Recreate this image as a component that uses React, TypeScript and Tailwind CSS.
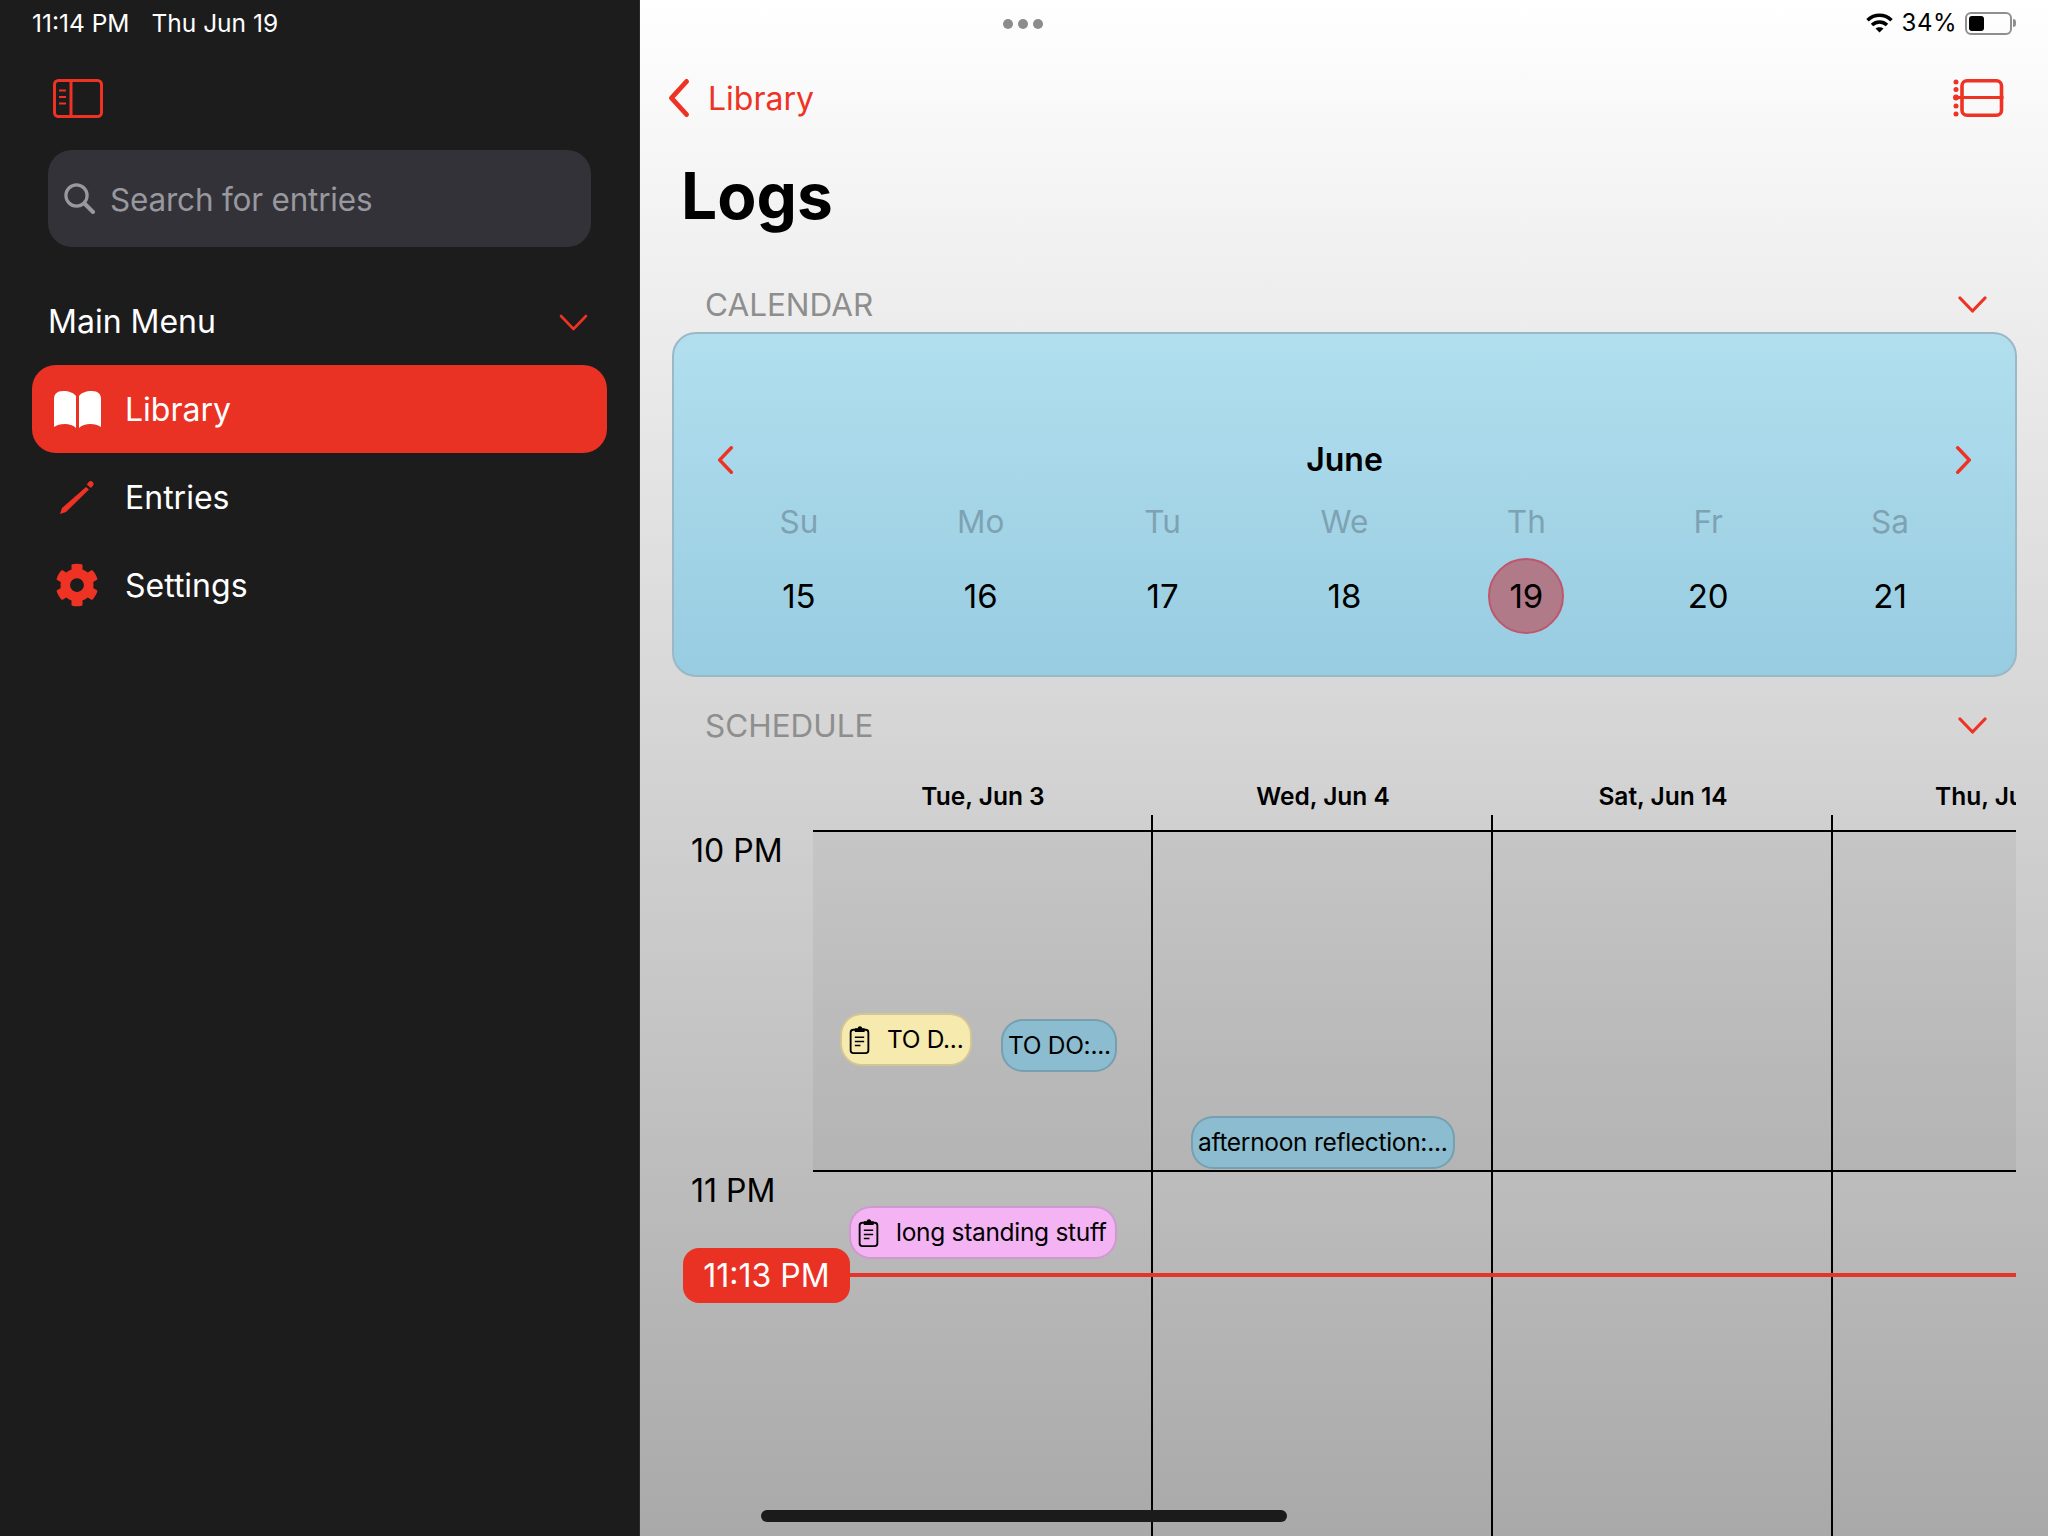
import React from "react";
import { FaCog } from "react-icons/fa";

const RED = "#ee3324";

function Chevron({ dir, className, sw = 3 }: { dir: "down" | "left" | "right"; className: string; sw?: number }) {
  const d = dir === "down" ? "M2 2 L14.5 15 L27 2" : dir === "left" ? "M16 2 L3 15 L16 28" : "M3 2 L16 15 L3 28";
  const vb = dir === "down" ? "0 0 29 17" : "0 0 19 30";
  return (
    <svg viewBox={vb} className={className} fill="none" stroke={RED} strokeWidth={sw} strokeLinecap="round" strokeLinejoin="round" preserveAspectRatio="none">
      <path d={d} />
    </svg>
  );
}

function SidebarIcon() {
  return (
    <svg viewBox="0 0 50 39" className="h-[39px] w-[50px]" fill="none" stroke={RED} strokeWidth="3">
      <rect x="1.5" y="1.5" width="47" height="36" rx="4" />
      <path d="M18 1.5V37.5" />
      <path d="M6 11.5h7M6 18h7M6 24.5h7" strokeWidth="2" />
    </svg>
  );
}

function SearchIcon() {
  return (
    <svg viewBox="0 0 31 31" className="h-[31px] w-[31px]" fill="none" stroke="#98989e" strokeWidth="3.2" strokeLinecap="round">
      <circle cx="12.5" cy="12.5" r="10.6" />
      <path d="M20.5 20.5L29 29" strokeWidth="4" />
    </svg>
  );
}

function BookIcon() {
  return (
    <svg viewBox="0 0 47 37" className="h-[37px] w-[47px]" fill="#ffffff">
      <path d="M0 8C0 3 3 0 9 0c6 0 11 2 13 5v32c-3-3-7-4-11-4-5 0-8 1-11 3z" />
      <path d="M47 8c0-5-3-8-9-8-6 0-11 2-13 5v32c3-3 7-4 11-4 5 0 8 1 11 3z" />
    </svg>
  );
}

function PencilIcon() {
  return (
    <svg viewBox="0 0 34 33" className="h-[33px] w-[34px]" fill={RED}>
      <path d="M26 6l3 2.600L6 31 0 33l2-6z" />
      <path d="M28.500 1.200c1.200-1.400 3-1.400 4.200-.2 1.200 1.200 1.200 2.800 0 4L30.800 7l-4-3.500z" />
    </svg>
  );
}

function ListIcon() {
  return (
    <svg viewBox="0 0 51 38" className="h-[38px] w-[51px]" fill="none" stroke={RED}>
      <rect x="9" y="1.800" width="39.500" height="34.400" rx="5" strokeWidth="3.600" />
      <path d="M3 18.500H50.500" strokeWidth="2.800" />
      <g fill={RED} stroke="none">
        <circle cx="3" cy="3" r="2.500" />
        <circle cx="3" cy="10.500" r="2.500" />
        <circle cx="3" cy="18.500" r="3" />
        <circle cx="3" cy="27" r="2.500" />
        <circle cx="3" cy="35" r="2.500" />
      </g>
    </svg>
  );
}

function WifiIcon() {
  return (
    <svg viewBox="0 0 27 20" className="h-[20px] w-[27px]" fill="none" stroke="#000" strokeWidth="3.600">
      <path d="M1.500 7.200C8.500 .6 18.500 .6 25.500 7.200" />
      <path d="M6 12C10.500 8 16.500 8 21 12" />
      <path d="M13.500 19.500L9.500 15.500C11.800 13.700 15.200 13.700 17.500 15.500Z" fill="#000" stroke="none" />
    </svg>
  );
}

function ClipIcon() {
  return (
    <svg viewBox="0 0 22 30" className="h-[28px] w-[21px] shrink-0" fill="none" stroke="#000" strokeWidth="2">
      <rect x="1.500" y="4" width="19" height="25" rx="3" />
      <path d="M7 5.500V3.500h3c0-3 3-3 3 0h2.500v2z" fill="#000" />
      <path d="M6 12h10M6 16.500h10M6 21h6" strokeWidth="1.600" />
    </svg>
  );
}

function NavRow({ icon, label, active }: { icon: React.ReactNode; label: string; active?: boolean }) {
  return (
    <div className={`flex h-[88px] items-center rounded-[24px] ${active ? "bg-[#ea3224]" : ""}`}>
      <div className="flex w-[90px] justify-center">{icon}</div>
      <span className="ml-[3px] mt-[2px] text-[32px] leading-none text-white">{label}</span>
    </div>
  );
}

function Chip({ className, text, clip }: { className: string; text: string; clip?: boolean }) {
  return (
    <div className={`absolute flex h-[53px] items-center overflow-hidden rounded-[22px] border-2 border-[#00000026] px-[5px] text-[24.500px] leading-none tracking-[-0.3px] text-black whitespace-nowrap ${className}`}>
      {clip && <span className="mr-[17px] ml-[2px] flex"><ClipIcon /></span>}
      {text}
    </div>
  );
}

function Column({ children }: { children?: React.ReactNode }) {
  return (
    <div className="relative flex h-full w-[340px] shrink-0 flex-col border-r-2 border-black pt-[15px]">
      <div className="h-[340px] border-t-2 border-black bg-[#0000000c]" />
      <div className="flex-1 border-t-2 border-black" />
      {children}
    </div>
  );
}

function SectionHead({ title }: { title: string }) {
  return (
    <div className="flex h-[33px] items-center justify-between pl-[33px] pr-[30px]">
      <span className="text-[31.500px] leading-none text-[#8e8e8e]">{title}</span>
      <Chevron dir="down" className="h-[17px] w-[29px]" sw={3.200} />
    </div>
  );
}

export default function App() {
  const week = [
    ["Su", "15"],
    ["Mo", "16"],
    ["Tu", "17"],
    ["We", "18"],
    ["Th", "19"],
    ["Fr", "20"],
    ["Sa", "21"],
  ];
  return (
    <div className="flex h-[1536px] w-[2048px] overflow-hidden font-['Inter',sans-serif]">
      <aside className="flex w-[640px] shrink-0 flex-col border-r border-[#2a2a2a] bg-[#1c1c1d]">
        <div className="flex h-[46px] items-center gap-[22px] pl-[32px] text-[24.500px] leading-none text-white">
          <span>11:14 PM</span>
          <span>Thu Jun 19</span>
        </div>
        <div className="ml-[53px] mt-[33px]">
          <SidebarIcon />
        </div>
        <div className="mx-[48px] mt-[32px] flex h-[97px] items-center rounded-[24px] bg-[#323238] pl-[16px]">
          <SearchIcon />
          <span className="ml-[15px] mt-[2px] text-[31.500px] leading-none tracking-[-0.2px] text-[#98989e]">Search for entries</span>
        </div>
        <div className="mt-[52px] flex h-[46px] items-center justify-between pl-[48px] pr-[51px]">
          <span className="text-[32px] leading-none text-white">Main Menu</span>
          <Chevron dir="down" className="h-[17px] w-[29px]" sw={2.600} />
        </div>
        <nav className="mx-[32px] mt-[20px] flex flex-col">
          <NavRow active label="Library" icon={<BookIcon />} />
          <NavRow label="Entries" icon={<PencilIcon />} />
          <NavRow label="Settings" icon={<FaCog className="h-[44px] w-[44px] text-[#ee3324]" />} />
        </nav>
      </aside>

      <main className="relative flex min-w-0 flex-1 flex-col bg-linear-to-b from-white to-[#a9a9a9]">
        <div className="relative flex h-[46px] items-center justify-end pr-[32px]">
          <div className="absolute left-[363px] top-[19px] flex gap-[5px]">
            <span className="h-[10px] w-[10px] rounded-full bg-[#8c8c8c]" />
            <span className="h-[10px] w-[10px] rounded-full bg-[#8c8c8c]" />
            <span className="h-[10px] w-[10px] rounded-full bg-[#8c8c8c]" />
          </div>
          <WifiIcon />
          <span className="ml-[9px] text-[24px] leading-none tracking-[0.5px] text-black">34%</span>
          <div className="ml-[8px] flex items-center">
            <div className="flex h-[23px] w-[47px] items-center rounded-[6px] border-2 border-[#8f8f8f] p-[2px]">
              <div className="h-full w-[15px] rounded-[3px] bg-black" />
            </div>
            <div className="ml-[1px] h-[8px] w-[3px] rounded-r-sm bg-[#8f8f8f]" />
          </div>
        </div>

        <div className="mt-[33px] flex h-[38px] items-center justify-between pl-[28px] pr-[44px]">
          <div className="flex items-center">
            <Chevron dir="left" className="h-[38px] w-[22px]" sw={4} />
            <span className="ml-[18px] mt-[1px] text-[32px] leading-none text-[#ee3324]">Library</span>
          </div>
          <ListIcon />
        </div>

        <h1 className="ml-[41px] mt-[44px] text-[64px] font-bold leading-[70px] text-black">Logs</h1>

        <div className="ml-[32px] mr-[31px] mt-[57px]">
          <SectionHead title="CALENDAR" />
          <div className="mt-[11px] flex h-[345px] flex-col rounded-[24px] border-2 border-[#9ab8c6] bg-linear-to-b from-[#b1dfee] to-[#98cce1] px-[34px] pt-[109px]">
            <div className="flex h-[34px] items-center justify-between px-[9px]">
              <Chevron dir="left" className="h-[28px] w-[17px]" sw={3.800} />
              <span className="text-[32px] font-semibold leading-none text-black">June</span>
              <Chevron dir="right" className="h-[28px] w-[17px]" sw={3.800} />
            </div>
            <div className="mt-[27px] grid grid-cols-7">
              {week.map(([d]) => (
                <div key={d} className="flex h-[36px] items-center justify-center text-[31.500px] leading-none text-[#7fa2b3]">{d}</div>
              ))}
            </div>
            <div className="mt-[18px] grid grid-cols-7">
              {week.map(([d, n]) => (
                <div key={n} className="flex h-[76px] items-center justify-center">
                  <span className={`flex h-[76px] w-[76px] items-center justify-center rounded-full text-[33px] leading-none text-black ${d === "Th" ? "border-2 border-[#c0566d] bg-[#b07a88]" : ""}`}>{n}</span>
                </div>
              ))}
            </div>
          </div>

          <div className="mt-[32px]">
            <SectionHead title="SCHEDULE" />
          </div>
        </div>

        <div className="relative ml-[32px] mr-[32px] mt-[38px] flex-1 overflow-hidden">
          <div className="flex h-[32px] items-center pl-[141px] text-[24.500px] font-semibold leading-none text-black">
            <div className="w-[340px] shrink-0 text-center whitespace-nowrap">Tue, Jun 3</div>
            <div className="w-[340px] shrink-0 text-center whitespace-nowrap">Wed, Jun 4</div>
            <div className="w-[340px] shrink-0 text-center whitespace-nowrap">Sat, Jun 14</div>
            <div className="w-[340px] shrink-0 text-center whitespace-nowrap">Thu, Jun 19</div>
          </div>
          <div className="mt-[3px] flex h-[721px]">
            <div className="relative w-[141px] shrink-0 text-[32px] leading-none text-black">
              <span className="absolute left-[19px] top-[20px]">10 PM</span>
              <span className="absolute left-[19px] top-[360px]">11 PM</span>
            </div>
            <Column>
              <Chip className="left-[27px] top-[198px] w-[132px] bg-[#f7eaae]" text="TO D..." clip />
              <Chip className="left-[188px] top-[204px] w-[116px] bg-[#8bbccf]" text="TO DO:..." />
              <Chip className="left-[36px] top-[391px] w-[268px] bg-[#f4b4f4]" text="long standing stuff" clip />
            </Column>
            <Column>
              <Chip className="left-[38px] top-[301px] w-[264px] bg-[#8bbccf]" text="afternoon reflection:..." />
            </Column>
            <Column />
            <Column />
          </div>
          <div className="absolute left-[178px] right-0 top-[493px] h-[4px] bg-[#e5352a]" />
          <div className="absolute left-[11px] top-[468px] flex h-[55px] w-[167px] items-center justify-center rounded-[16px] bg-[#ea3224] text-[32px] leading-none text-white">11:13 PM</div>
        </div>

        <div className="absolute bottom-[14px] left-[121px] h-[12px] w-[526px] rounded-full bg-[#1b1b1b]" />
      </main>
    </div>
  );
}
